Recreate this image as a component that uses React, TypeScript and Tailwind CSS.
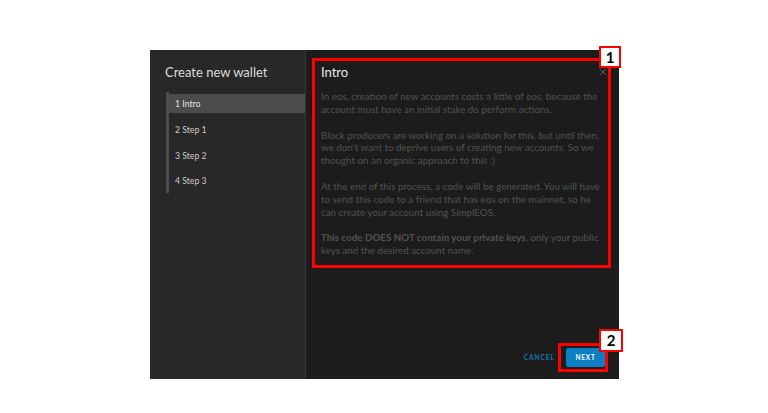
import React from "react";

const steps = ["1 Intro", "2 Step 1", "3 Step 2", "4 Step 3"];

function Marker({ n, className }: { n: string; className: string }) {
  return (
    <div
      className={`absolute flex items-center justify-center border-2 border-[#ff0000] bg-white text-[15px] font-bold leading-none text-black ${className}`}
    >
      {n}
    </div>
  );
}

export default function App() {
  return (
    <div
      className="h-[413px] w-full bg-white pl-[150px] pt-[50px]"
      style={{ fontFamily: "Lato, 'Open Sans', sans-serif" }}
    >
      <div className="flex h-[329px] w-[469px]">
        {/* left: steps */}
        <aside className="w-[156px] border-r border-[#383838] bg-[#282828] pt-[13px]">
          <h1 className="pl-[15px] text-[13px] leading-[18px] text-[#dcdcdc]">
            Create new wallet
          </h1>
          <ul className="ml-[16px] mt-[11px] flex flex-col gap-[6.8px] border-l-[3px] border-l-[#4d4d4d] py-[2px] pb-[2.5px]">
            {steps.map((s, i) => (
              <li
                key={s}
                className={
                  i === 0
                    ? "flex h-[19px] items-center bg-[#4b4b4b] pl-[6px] text-[8.7px] text-[#e4e4e4]"
                    : "flex h-[19px] items-center pl-[6px] text-[8.7px] text-[#c8c8c8]"
                }
              >
                {s}
              </li>
            ))}
          </ul>
        </aside>

        {/* right: content */}
        <section className="relative flex flex-1 flex-col bg-[#1c1c1c] px-[15px] pt-[13px]">
          <div className="flex items-center justify-between">
            <h2 className="text-[13px] leading-[18px] text-[#e8e8e8]">Intro</h2>
            <svg width="8" height="8" viewBox="0 0 8 8" className="mr-[-3px]">
              <path d="M1 1L7 7M7 1L1 7" stroke="#5a5a5a" strokeWidth="1" />
            </svg>
          </div>
          <div className="mt-[9px] flex flex-col gap-[13px] whitespace-nowrap text-[9.8px] leading-[12.8px] text-[#525252]">
            <p>
              In eos, creation of new accounts costs a little of eos, because the
              <br />
              account must have an initial stake do perform actions.
            </p>
            <p>
              Block producers are working on a solution for this, but until then,
              <br />
              we don't want to deprive users of creating new accounts. So we
              <br />
              thought on an organic approach to this :)
            </p>
            <p>
              At the end of this process, a code will be generated. You will have
              <br />
              to send this code to a friend that has eos on the mainnet, so he
              <br />
              can create your account using SimplEOS.
            </p>
            <p>
              <strong className="font-bold">This code DOES NOT contain your private keys</strong>, only your public
              <br />
              keys and the desired account name.
            </p>
          </div>

          <div className="mt-auto mb-[12px] flex items-center justify-end gap-[11px]">
            <button className="text-[6.5px] font-bold tracking-[1px] text-[#1877b0]">CANCEL</button>
            <button className="mr-[-1px] h-[19px] w-[39px] rounded-[2px] bg-[#0c7ec1] text-[6.5px] font-bold tracking-[0.8px] text-white">
              NEXT
            </button>
          </div>

          {/* annotation overlays */}
          <div className="pointer-events-none absolute left-[6px] top-[8px] h-[210px] w-[299px] border-[3px] border-[#ff0000]" />
          <Marker n="1" className="left-[293px] top-[-4px] h-[22px] w-[22px]" />
          <div className="pointer-events-none absolute left-[252px] top-[293px] h-[29px] w-[50px] border-[3px] border-[#ff0000]" />
          <Marker n="2" className="left-[293px] top-[279px] h-[23px] w-[24px]" />
        </section>
      </div>
    </div>
  );
}
